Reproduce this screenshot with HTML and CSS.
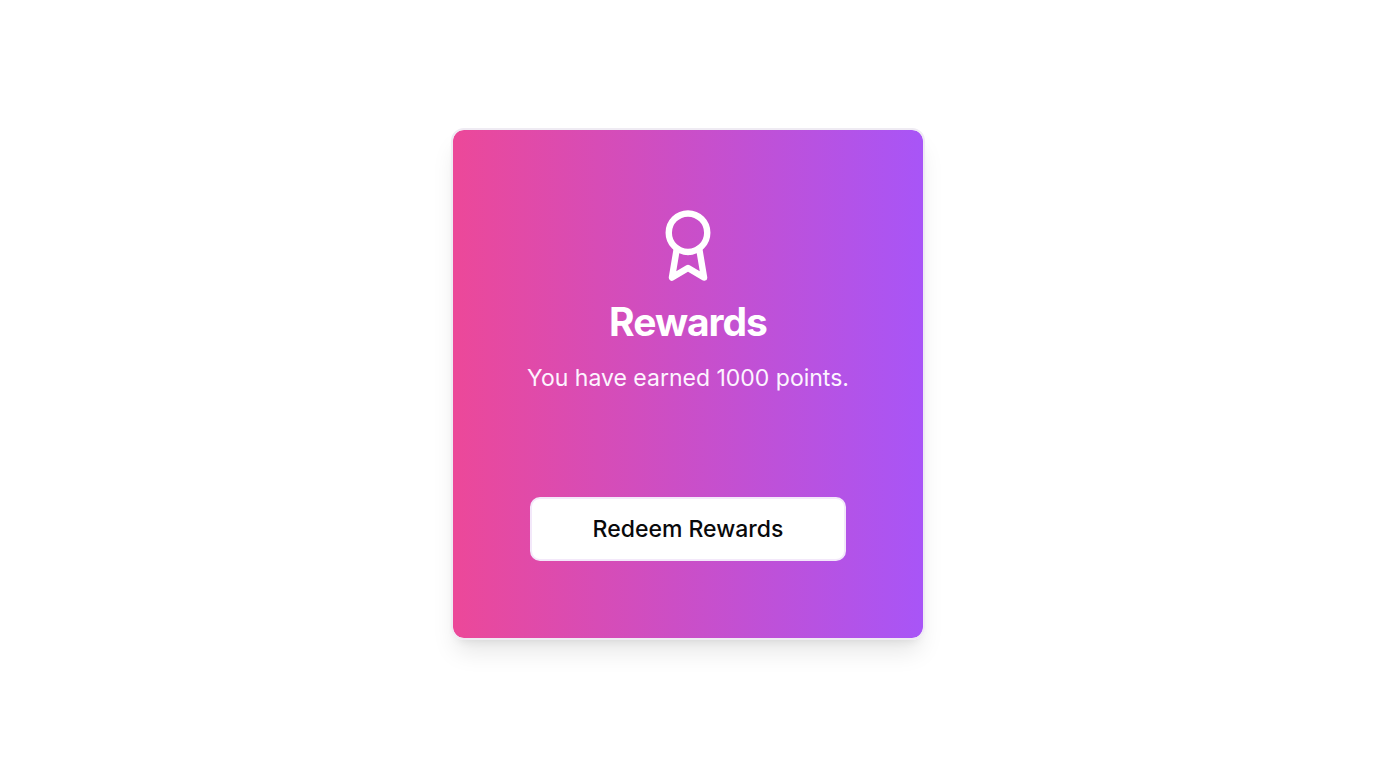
FILE: index.html
```
<!DOCTYPE html>
<html lang="en">
<head>
<meta charset="utf-8">
<meta name="viewport" content="width=device-width, initial-scale=1">
<title>Rewards</title>
<link rel="stylesheet" href="styles.css">
</head>
<body>
<main class="page">
  <section class="card">
    <header class="card-header">
      <svg class="award" viewBox="0 0 24 24" fill="none" stroke="currentColor" stroke-width="2" stroke-linecap="round" stroke-linejoin="round" aria-hidden="true">
        <circle cx="12" cy="8" r="6"/>
        <path d="M15.477 12.89 17 22l-5-3-5 3 1.523-9.11"/>
      </svg>
      <h1 class="title">Rewards</h1>
      <p class="points">You have earned 1000 points.</p>
    </header>
    <button class="redeem" type="button">Redeem Rewards</button>
  </section>
</main>
</body>
</html>
```
FILE: styles.css
```
* {
  box-sizing: border-box;
}

body {
  margin: 0;
  background: #fff;
  font-family: Inter, "Liberation Sans", sans-serif;
  font-optical-sizing: none;
}

.page {
  display: flex;
  align-items: center;
  justify-content: center;
  min-height: 100vh;
}

.card {
  display: flex;
  flex-direction: column;
  gap: 103px;
  width: 100%;
  max-width: 474px;
  padding: 77px;
  border: 2px solid #efebf3;
  border-radius: 13px;
  background: linear-gradient(to right, #ec4899, #a855f7) padding-box;
  box-shadow: 0 16px 24px -5px rgb(0 0 0 / 10%), 0 6px 10px -6px rgb(0 0 0 / 10%);
  color: #fff;
}

.card-header {
  display: flex;
  flex-direction: column;
  align-items: center;
}

.award {
  width: 78px;
  height: 77px;
  margin-bottom: 19px;
}

.title {
  margin: 0 0 21px;
  font-size: 39px;
  font-weight: 700;
  line-height: 38px;
  letter-spacing: -1px;
}

.points {
  margin: 0;
  color: #fdf4ff;
  font-size: 23px;
  line-height: 32px;
  white-space: nowrap;
}

.redeem {
  height: 64px;
  padding: 0 26px;
  border: 2px solid #f3e8fa;
  border-radius: 10px;
  background: #fff;
  color: #09090b;
  font: 500 23px/32px Inter, "Liberation Sans", sans-serif;
}
```
